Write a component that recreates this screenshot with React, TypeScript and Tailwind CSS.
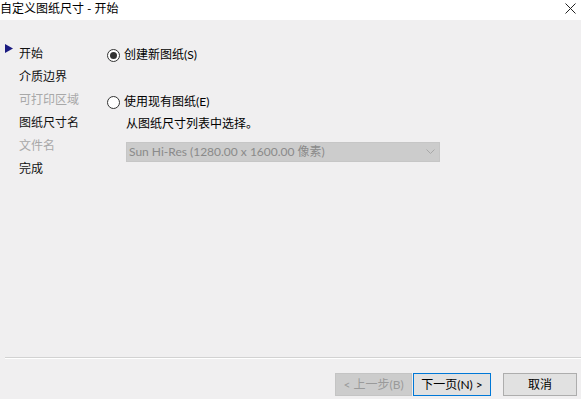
const font = { fontFamily: 'Lato, "Noto Sans CJK SC", sans-serif' };

const steps = [
  { label: '开始', active: true, enabled: true },
  { label: '介质边界', enabled: true },
  { label: '可打印区域', enabled: false },
  { label: '图纸尺寸名', enabled: true },
  { label: '文件名', enabled: false },
  { label: '完成', enabled: true },
];

function Radio({ checked }: { checked?: boolean }) {
  return (
    <span className="w-[13px] h-[13px] rounded-full border border-[#333] bg-white flex items-center justify-center shrink-0">
      {checked && <span className="w-[7px] h-[7px] rounded-full bg-[#333]"></span>}
    </span>
  );
}

export default function App() {
  return (
    <div className="w-[581px] h-[399px] bg-[#f0eff0] flex flex-col text-[12px] text-black overflow-hidden" style={font}>
      {/* Title bar */}
      <div className="h-[20px] bg-white flex items-center justify-between shrink-0">
        <span className="leading-none -mt-[3px]">自定义图纸尺寸 - 开始</span>
        <svg width="11" height="11" viewBox="0 0 11 11" className="mr-[5px] -mt-[3px]">
          <path d="M0.5 0.5 L10.5 10.5 M10.5 0.5 L0.5 10.5" stroke="#222" strokeWidth="1" />
        </svg>
      </div>

      <div className="flex flex-1">
        {/* Step list */}
        <div className="w-[102px] pl-[5px] pt-[22px] shrink-0">
          {steps.map((s) => (
            <div key={s.label} className="h-[23px] flex items-center">
              <span className="w-[14px] flex items-start h-full pt-[2px]">
                {s.active && (
                  <svg width="8" height="9" viewBox="0 0 8 9">
                    <path d="M0 0 L8 4.5 L0 9 Z" fill="#1a1a80" />
                  </svg>
                )}
              </span>
              <span className={s.enabled ? 'text-[#111]' : 'text-[#a8a8a8]'}>{s.label}</span>
            </div>
          ))}
        </div>

        {/* Content */}
        <div className="flex-1 pl-[5px] pt-[27px] flex flex-col">
          <label className="flex items-center gap-[4px] h-[16px]">
            <Radio checked />
            <span>创建新图纸(S)</span>
          </label>
          <label className="flex items-center gap-[4px] h-[16px] mt-[31px]">
            <Radio />
            <span>使用现有图纸(E)</span>
          </label>
          <div className="ml-[19px] mt-[6px] h-[16px] flex items-center">从图纸尺寸列表中选择。</div>
          <div className="ml-[19px] mt-[10px] w-[314px] h-[20px] bg-[#cccccc] border border-[#c6c6c6] flex items-center justify-between pl-[2px] pr-[4px] text-[#8a8a8a]">
            <span>Sun Hi-Res (1280.00 x 1600.00 像素)</span>
            <svg width="9" height="6" viewBox="0 0 9 6">
              <path d="M0.5 0.5 L4.5 4.5 L8.5 0.5" fill="none" stroke="#a8a8a8" strokeWidth="1" />
            </svg>
          </div>
        </div>
      </div>

      {/* Separator */}
      <div className="ml-[5px] h-[2px] border-t border-[#d2d2d2] border-b border-b-white shrink-0"></div>

      {/* Buttons */}
      <div className="h-[40px] flex items-start justify-end pt-[14px] pr-[4px] shrink-0">
        <button className="w-[77px] h-[23px] bg-[#cccccc] border border-[#c4c4c4] text-[#9a9a9a] flex items-center justify-center" style={font}>
          &lt; 上一步(B)
        </button>
        <button className="ml-[1px] w-[78px] h-[23px] bg-[#e1e1e1] border border-[#0078d7] flex items-center justify-center" style={font}>
          下一页(N) &gt;
        </button>
        <button className="ml-[12px] w-[74px] h-[23px] bg-[#e1e1e1] border border-[#adadad] flex items-center justify-center" style={font}>
          取消
        </button>
      </div>
    </div>
  );
}
